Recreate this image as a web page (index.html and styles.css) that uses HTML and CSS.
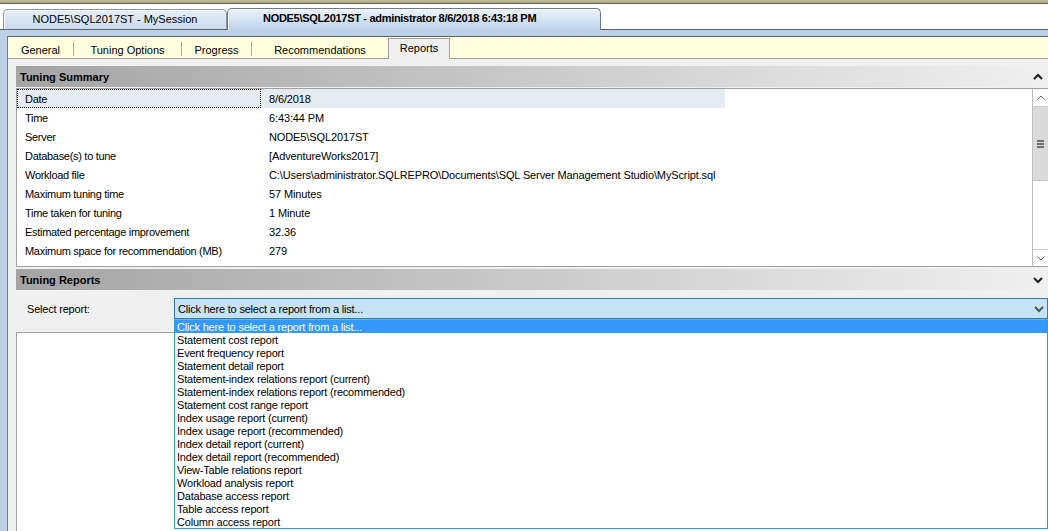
FILE: index.html
```html
<!DOCTYPE html>
<html>
<head>
<meta charset="utf-8">
<link rel="stylesheet" href="styles.css">
</head>
<body>
<div class="topband"></div>
<div class="doctabs">
  <div class="dtab">NODE5\SQL2017ST - MySession</div>
  <div class="dtab active">NODE5\SQL2017ST - administrator 8/6/2018 6:43:18 PM</div>
</div>
<div class="frame">
  <div class="inner">
    <div class="subtabs">
      <div class="stab w-general">General</div>
      <i class="sep"></i>
      <div class="stab w-tuning">Tuning Options</div>
      <i class="sep"></i>
      <div class="stab w-progress">Progress</div>
      <i class="sep"></i>
      <div class="stab w-recs">Recommendations</div>
      <div class="stab active">Reports</div>
    </div>
    <div class="page">
      <div class="shead">
        <span>Tuning Summary</span>
        <svg class="hchev" width="10" height="7" viewBox="0 0 10 7"><polyline points="1,6 5,2 9,6" fill="none" stroke="#1e1e1e" stroke-width="2"/></svg>
      </div>
      <div class="sumbox">
        <div class="rows">
          <div class="row selected"><span class="lbl focus">Date</span><span class="val">8/6/2018</span></div>
          <div class="row"><span class="lbl">Time</span><span class="val">6:43:44 PM</span></div>
          <div class="row"><span class="lbl">Server</span><span class="val">NODE5\SQL2017ST</span></div>
          <div class="row"><span class="lbl">Database(s) to tune</span><span class="val">[AdventureWorks2017]</span></div>
          <div class="row"><span class="lbl">Workload file</span><span class="val">C:\Users\administrator.SQLREPRO\Documents\SQL Server Management Studio\MyScript.sql</span></div>
          <div class="row"><span class="lbl">Maximum tuning time</span><span class="val">57 Minutes</span></div>
          <div class="row"><span class="lbl">Time taken for tuning</span><span class="val">1 Minute</span></div>
          <div class="row"><span class="lbl">Estimated percentage improvement</span><span class="val">32.36</span></div>
          <div class="row"><span class="lbl">Maximum space for recommendation (MB)</span><span class="val">279</span></div>
          <div class="row"><span class="lbl">Space used currently (MB)</span><span class="val">188</span></div>
        </div>
        <div class="vscroll">
          <div class="sbtn up"><svg width="8" height="5" viewBox="0 0 8 5"><polyline points="0.5,4.5 4,1 7.5,4.5" fill="none" stroke="#6a6a6a" stroke-width="1"/></svg></div>
          <div class="thumb"><i></i><i></i><i></i></div>
          <div class="track"></div>
          <div class="sbtn down"><svg width="8" height="5" viewBox="0 0 8 5"><polyline points="0.5,0.5 4,4 7.5,0.5" fill="none" stroke="#6a6a6a" stroke-width="1"/></svg></div>
        </div>
      </div>
      <div class="shead second">
        <span>Tuning Reports</span>
        <svg class="hchev" width="10" height="7" viewBox="0 0 10 7"><polyline points="1,1 5,5 9,1" fill="none" stroke="#1e1e1e" stroke-width="2"/></svg>
      </div>
      <div class="selrow">
        <span class="sellabel">Select report:</span>
        <div class="combo">
          <span class="combotext">Click here to select a report from a list...</span>
          <svg class="cchev" width="10" height="7" viewBox="0 0 10 7"><polyline points="1,1 5,5 9,1" fill="none" stroke="#555" stroke-width="2"/></svg>
          <ul class="droplist">
            <li class="hl">Click here to select a report from a list...</li>
            <li>Statement cost report</li>
            <li>Event frequency report</li>
            <li>Statement detail report</li>
            <li>Statement-index relations report (current)</li>
            <li>Statement-index relations report (recommended)</li>
            <li>Statement cost range report</li>
            <li>Index usage report (current)</li>
            <li>Index usage report (recommended)</li>
            <li>Index detail report (current)</li>
            <li>Index detail report (recommended)</li>
            <li>View-Table relations report</li>
            <li>Workload analysis report</li>
            <li>Database access report</li>
            <li>Table access report</li>
            <li>Column access report</li>
          </ul>
        </div>
      </div>
      <div class="result"></div>
    </div>
  </div>
</div>
</body>
</html>
```

FILE: styles.css
```css
* { box-sizing: border-box; }
html, body { margin: 0; padding: 0; }
body {
  width: 1048px;
  height: 531px;
  overflow: hidden;
  display: flex;
  flex-direction: column;
  font-family: "Liberation Sans", Arial, sans-serif;
  font-size: 11px;
  color: #000;
  background: #fff;
}
.topband {
  height: 4px;
  background: linear-gradient(#c2bf9f, #a9a585);
  border-bottom: 1px solid #5f5f52;
  flex: none;
}
.doctabs {
  flex: none;
  height: 26px;
  background: #fff;
  border-bottom: 1px solid #5e5e5e;
  display: flex;
  align-items: flex-end;
  padding-left: 3px;
}
.dtab {
  width: 224px;
  height: 20px;
  border: 1px solid #8795a8;
  border-bottom: none;
  border-radius: 5px 5px 0 0;
  background: linear-gradient(#e6eef7, #cbdbee);
  display: flex;
  align-items: center;
  justify-content: center;
  padding-bottom: 2px;
  white-space: nowrap;
  box-shadow: inset 1px 1px 0 #f6f9fd;
}
.dtab.active {
  width: 374px;
  height: 22px;
  margin-bottom: -1px;
  position: relative;
  z-index: 1;
  border-color: #6c7a8e;
  background: linear-gradient(#edf3fa, #bdd2ea);
  font-weight: bold;
  letter-spacing: -0.3px;
  justify-content: flex-start;
  padding-left: 35px;
  padding-bottom: 4px;
}
.frame {
  flex: 1;
  min-height: 0;
  background: #bcd0e8;
  padding: 6px 0 0 7px;
  display: flex;
}
.inner {
  flex: 1;
  border-top: 1px solid #626262;
  border-left: 1px solid #7a7a7a;
  display: flex;
  flex-direction: column;
}
.subtabs {
  flex: none;
  height: 22px;
  background: #ffffe0;
  border-bottom: 1px solid #a0a0a0;
  display: flex;
}
.stab {
  display: flex;
  align-items: flex-end;
  justify-content: center;
  padding-bottom: 1px;
  line-height: 13px;
  white-space: nowrap;
}
.w-general { width: 65px; }
.w-tuning { width: 107px; }
.w-progress { width: 69px; }
.w-recs { width: 136px; }
.sep {
  width: 1px;
  height: 14px;
  margin-top: 5px;
  background: #a9a9a9;
}
.stab.active {
  width: 62px;
  height: 21px;
  margin-top: 1px;
  margin-bottom: -1px;
  border: 1px solid #a0a0a0;
  border-bottom: none;
  background: #f0f0f0;
  align-items: center;
  padding-bottom: 2px;
  position: relative;
  z-index: 1;
}
.page {
  flex: 1;
  background: #f0f0f0;
  padding: 7px 0 0 8px;
  display: flex;
  flex-direction: column;
  min-height: 0;
}
.shead {
  flex: none;
  height: 21px;
  background: linear-gradient(to right, #a4a4a4, #f0f0f0);
  display: flex;
  align-items: center;
  justify-content: space-between;
  padding: 0 5px 0 4px;
  font-weight: bold;
}
.shead.second { margin-top: 2px; height: 21px; padding-top: 1px; }
.hchev { display: block; }
.sumbox {
  flex: none;
  margin-top: 1px;
  height: 179px;
  background: #fff;
  border-top: 1px solid #a0a0a0;
  border-left: 1px solid #a0a0a0;
  border-bottom: 1px solid #a0a0a0;
  display: flex;
}
.rows {
  flex: 1;
  overflow: hidden;
}
.row {
  width: 708px;
  height: 19px;
  display: grid;
  grid-template-columns: 244px 464px;
  white-space: nowrap;
}
.row.selected { background: #e6ebf1; }
.lbl {
  height: 19px;
  line-height: 21px;
  padding-left: 8px;
  letter-spacing: -0.3px;
}
.lbl.focus { outline: 1px dotted #000; outline-offset: -1px; }
.val {
  height: 19px;
  line-height: 21px;
  padding-left: 8px;
  letter-spacing: -0.12px;
}
.vscroll {
  width: 16px;
  flex: none;
  border-left: 1px solid #bdbdbd;
  display: flex;
  flex-direction: column;
  background: #fff;
}
.sbtn {
  height: 18px;
  display: flex;
  align-items: center;
  justify-content: center;
  background: #fff;
}
.sbtn.up { border-bottom: 1px solid #cfcfcf; }
.sbtn.down { height: 17px; border-top: 1px solid #cfcfcf; }
.thumb {
  height: 74px;
  background: #dadada;
  border-bottom: 1px solid #c6c6c6;
  display: flex;
  flex-direction: column;
  align-items: center;
  justify-content: center;
  gap: 1px;
}
.thumb i {
  display: block;
  width: 7px;
  height: 2px;
  background: #6e6e6e;
}
.track { flex: 1; background: #fff; }
.selrow {
  flex: none;
  height: 42px;
  display: flex;
  align-items: flex-start;
  padding-top: 8px;
  letter-spacing: -0.2px;
}
.sellabel {
  width: 158px;
  padding-left: 11px;
  height: 21px;
  line-height: 22px;
  white-space: nowrap;
}
.combo {
  width: 874px;
  height: 21px;
  background: #c5e3f5;
  border: 1px solid #3b78a8;
  display: flex;
  align-items: center;
  justify-content: space-between;
  padding: 1px 3px 0 3px;
  position: relative;
  white-space: nowrap;
}
.cchev { display: block; }
.droplist {
  position: absolute;
  top: 20px;
  left: -1px;
  width: 874px;
  margin: 0;
  padding: 0;
  list-style: none;
  background: #fff;
  border: 1px solid #26a0da;
  border-top-color: #5fb6e0;
  z-index: 5;
}
.droplist li {
  height: 13px;
  line-height: 14px;
  padding-left: 2px;
  white-space: nowrap;
}
.droplist li.hl { background: #3399ff; color: #fff; }
.result {
  flex: 1;
  background: #fff;
  border-top: 1px solid #a0a0a0;
  border-left: 1px solid #a0a0a0;
}
```
